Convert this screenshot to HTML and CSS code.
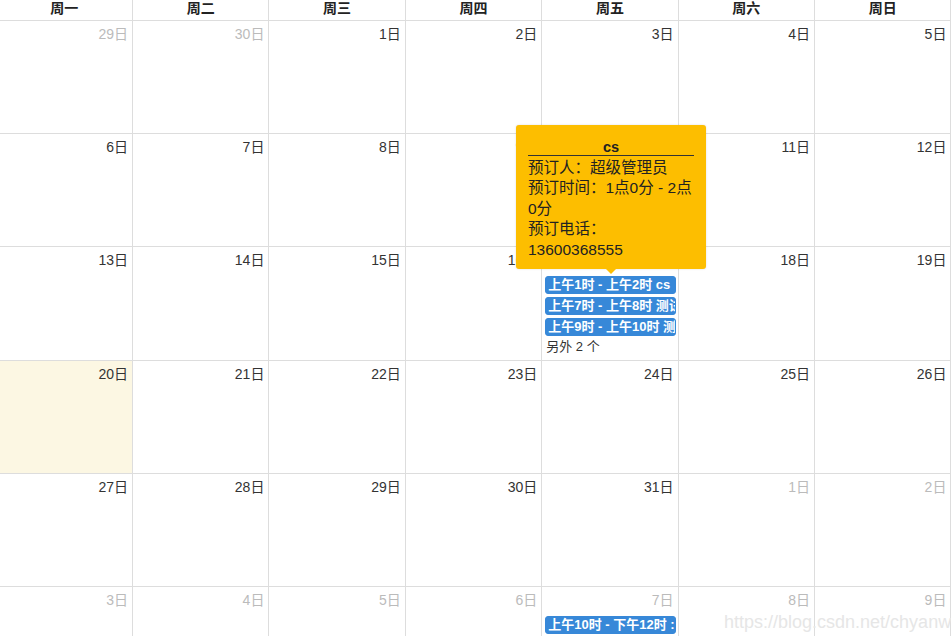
FILE: index.html
```html
<!DOCTYPE html>
<html lang="zh">
<head>
<meta charset="utf-8">
<title>Calendar</title>
<link rel="stylesheet" href="styles.css">
</head>
<body>
<div class="cal">
  <div class="head">周一</div><div class="head">周二</div><div class="head">周三</div><div class="head">周四</div><div class="head">周五</div><div class="head">周六</div><div class="head">周日</div>

  <div class="day other"><span class="num">29日</span></div>
  <div class="day other"><span class="num">30日</span></div>
  <div class="day"><span class="num">1日</span></div>
  <div class="day"><span class="num">2日</span></div>
  <div class="day"><span class="num">3日</span></div>
  <div class="day"><span class="num">4日</span></div>
  <div class="day"><span class="num">5日</span></div>

  <div class="day"><span class="num">6日</span></div>
  <div class="day"><span class="num">7日</span></div>
  <div class="day"><span class="num">8日</span></div>
  <div class="day"><span class="num">9日</span></div>
  <div class="day"><span class="num">10日</span></div>
  <div class="day"><span class="num">11日</span></div>
  <div class="day"><span class="num">12日</span></div>

  <div class="day"><span class="num">13日</span></div>
  <div class="day"><span class="num">14日</span></div>
  <div class="day"><span class="num">15日</span></div>
  <div class="day"><span class="num">16日</span></div>
  <div class="day"><span class="num">17日</span>
    <div class="events">
      <div class="event">上午1时 - 上午2时 cs</div>
      <div class="event">上午7时 - 上午8时 测试</div>
      <div class="event">上午9时 - 上午10时 测试</div>
      <div class="more">另外 2 个</div>
    </div>
  </div>
  <div class="day"><span class="num">18日</span></div>
  <div class="day"><span class="num">19日</span></div>

  <div class="day today"><span class="num">20日</span></div>
  <div class="day"><span class="num">21日</span></div>
  <div class="day"><span class="num">22日</span></div>
  <div class="day"><span class="num">23日</span></div>
  <div class="day"><span class="num">24日</span></div>
  <div class="day"><span class="num">25日</span></div>
  <div class="day"><span class="num">26日</span></div>

  <div class="day"><span class="num">27日</span></div>
  <div class="day"><span class="num">28日</span></div>
  <div class="day"><span class="num">29日</span></div>
  <div class="day"><span class="num">30日</span></div>
  <div class="day"><span class="num">31日</span></div>
  <div class="day other"><span class="num">1日</span></div>
  <div class="day other"><span class="num">2日</span></div>

  <div class="day other"><span class="num">3日</span></div>
  <div class="day other"><span class="num">4日</span></div>
  <div class="day other"><span class="num">5日</span></div>
  <div class="day other"><span class="num">6日</span></div>
  <div class="day other"><span class="num">7日</span>
    <div class="events">
      <div class="event">上午10时 - 下午12时 : 测试</div>
    </div>
  </div>
  <div class="day other"><span class="num">8日</span></div>
  <div class="day other"><span class="num">9日</span></div>
</div>

<div class="tip">
  <div class="tip-title">cs</div>
  <div class="tip-body">
    <div>预订人：超级管理员</div>
    <div>预订时间：1点0分 - 2点0分</div>
    <div>预订电话：13600368555</div>
  </div>
</div>

<div class="watermark">https://blog.csdn.net/chyanwu</div>
</body>
</html>
```
FILE: styles.css
```css
html, body {
  margin: 0;
  padding: 0;
  background: #fff;
  overflow: hidden;
}
body {
  width: 951px;
  height: 636px;
  position: relative;
  font-family: "Liberation Sans", "Noto Sans CJK SC", sans-serif;
  color: #333;
}
.cal {
  margin-left: -3.4px;
  width: 954.8px;
  display: grid;
  grid-template-columns: repeat(7, 1fr);
  grid-template-rows: 20.7px repeat(6, 113.3px);
}
.head {
  box-sizing: border-box;
  border-right: 1px solid #ddd;
  border-bottom: 1px solid #ddd;
  font-weight: bold;
  font-size: 14px;
  line-height: 17px;
  text-align: center;
  color: #222;
}
.day {
  box-sizing: border-box;
  border-right: 1px solid #ddd;
  border-bottom: 1px solid #ddd;
  display: flex;
  flex-direction: column;
  min-width: 0;
  overflow: hidden;
}
.num {
  display: block;
  text-align: right;
  font-size: 14px;
  line-height: 18px;
  padding: 4px 4px 0 0;
  color: #333;
}
.other .num {
  color: #bbb;
}
.today {
  background: #fcf7e3;
}
.events {
  margin-top: 7px;
  display: flex;
  flex-direction: column;
}
.event {
  margin: 0 2px 3px 3px;
  height: 18px;
  box-sizing: border-box;
  background: #3788d8;
  border: 1px solid #3788d8;
  border-radius: 3px;
  color: #fff;
  font-size: 13px;
  font-weight: bold;
  line-height: 16px;
  padding-left: 2px;
  white-space: nowrap;
  overflow: hidden;
}
.more {
  font-size: 13px;
  line-height: 16px;
  padding-left: 4px;
  color: #333;
}
.tip {
  position: absolute;
  left: 516px;
  top: 125px;
  width: 190px;
  height: 144px;
  box-sizing: border-box;
  padding: 14px 12px 0 12px;
  background: #fdbe00;
  border-radius: 3px;
  box-shadow: 0 0 2px rgba(0,0,0,0.15);
  color: #222;
}
.tip::after {
  content: "";
  position: absolute;
  left: 90px;
  bottom: -5px;
  border-left: 5px solid transparent;
  border-right: 5px solid transparent;
  border-top: 5px solid #fdbe00;
}
.tip-title {
  font-weight: bold;
  font-size: 14.5px;
  line-height: 16px;
  text-align: center;
  border-bottom: 1px solid #333;
}
.tip-body {
  margin-top: 2px;
  font-size: 15.5px;
  line-height: 20.4px;
}
.watermark {
  position: absolute;
  left: 724px;
  top: 612px;
  font-size: 18px;
  line-height: 20px;
  color: #e6e6e6;
  white-space: nowrap;
}
```
